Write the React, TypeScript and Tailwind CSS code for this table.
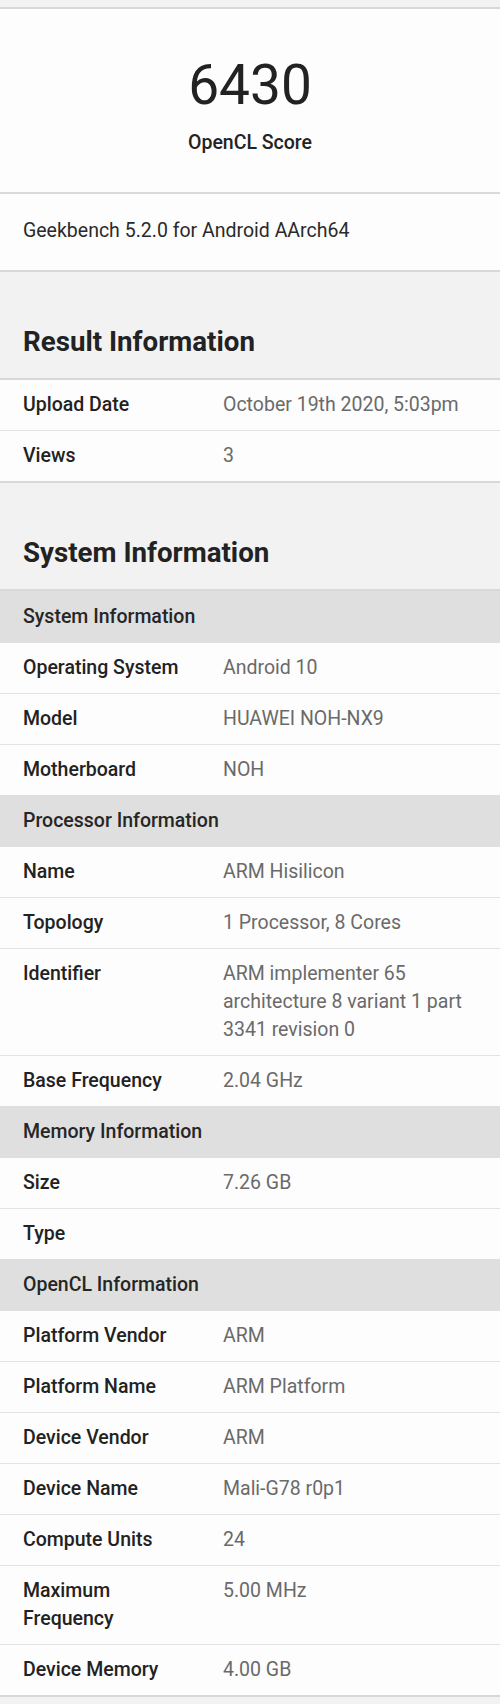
type Row = { label: string; value?: string };
type Group = { title: string; rows: Row[] };

const resultRows: Row[] = [
  { label: 'Upload Date', value: 'October 19th 2020, 5:03pm' },
  { label: 'Views', value: '3' },
];

const systemGroups: Group[] = [
  {
    title: 'System Information',
    rows: [
      { label: 'Operating System', value: 'Android 10' },
      { label: 'Model', value: 'HUAWEI NOH-NX9' },
      { label: 'Motherboard', value: 'NOH' },
    ],
  },
  {
    title: 'Processor Information',
    rows: [
      { label: 'Name', value: 'ARM Hisilicon' },
      { label: 'Topology', value: '1 Processor, 8 Cores' },
      {
        label: 'Identifier',
        value: 'ARM implementer 65 architecture 8 variant 1 part 3341 revision 0',
      },
      { label: 'Base Frequency', value: '2.04 GHz' },
    ],
  },
  {
    title: 'Memory Information',
    rows: [
      { label: 'Size', value: '7.26 GB' },
      { label: 'Type' },
    ],
  },
  {
    title: 'OpenCL Information',
    rows: [
      { label: 'Platform Vendor', value: 'ARM' },
      { label: 'Platform Name', value: 'ARM Platform' },
      { label: 'Device Vendor', value: 'ARM' },
      { label: 'Device Name', value: 'Mali-G78 r0p1' },
      { label: 'Compute Units', value: '24' },
      { label: 'Maximum Frequency', value: '5.00 MHz' },
      { label: 'Device Memory', value: '4.00 GB' },
    ],
  },
];

function InfoRow({ label, value }: Row) {
  return (
    <div className="flex border-b border-[#e3e3e3] last:border-b-0 py-[11px] text-[19.5px] leading-[28px]">
      <div className="w-[223px] shrink-0 pl-[23px] pr-[30px] font-medium text-[#222]">
        {label}
      </div>
      <div className="flex-1 pr-[20px] text-[#6a6a6a]">{value}</div>
    </div>
  );
}

function GroupHeader({ title }: { title: string }) {
  return (
    <div className="bg-[#dfdfdf] pl-[23px] py-[12px] text-[19.5px] leading-[28px] font-medium text-[#262626]">
      {title}
    </div>
  );
}

function SectionTitle({ children }: { children: string }) {
  return (
    <h2 className="pl-[23px] pt-[54px] pb-[20px] text-[27.7px] leading-[32px] font-bold text-[#222]">
      {children}
    </h2>
  );
}

export default function App() {
  return (
    <main
      className="w-full min-h-screen bg-[#f2f2f2] pt-[7px] pb-[8px]"
      style={{ fontFamily: 'Roboto, "Liberation Sans", sans-serif' }}
    >
      <section className="bg-[#fdfdfd] border-y-2 border-[#d8d8d8]">
        <div className="flex flex-col items-center pt-[46px] pb-[35px]">
          <p className="text-[55px] leading-[60px] text-[#222]">6430</p>
          <p className="mt-[14px] text-[19.5px] leading-[28px] font-medium text-[#222]">
            OpenCL Score
          </p>
        </div>
        <div className="border-t-2 border-[#dadada] pl-[23px] pt-[23px] pb-[25px] text-[19.5px] leading-[28px] text-[#2a2a2a]">
          Geekbench 5.2.0 for Android AArch64
        </div>
      </section>

      <SectionTitle>Result Information</SectionTitle>
      <section className="bg-[#fdfdfd] border-y-2 border-[#d8d8d8]">
        {resultRows.map((r) => (
          <InfoRow key={r.label} {...r} />
        ))}
      </section>

      <SectionTitle>System Information</SectionTitle>
      <section className="bg-[#fdfdfd] border-y-2 border-[#d8d8d8]">
        {systemGroups.map((g) => (
          <div key={g.title}>
            <GroupHeader title={g.title} />
            {g.rows.map((r) => (
              <InfoRow key={r.label} {...r} />
            ))}
          </div>
        ))}
      </section>
    </main>
  );
}
